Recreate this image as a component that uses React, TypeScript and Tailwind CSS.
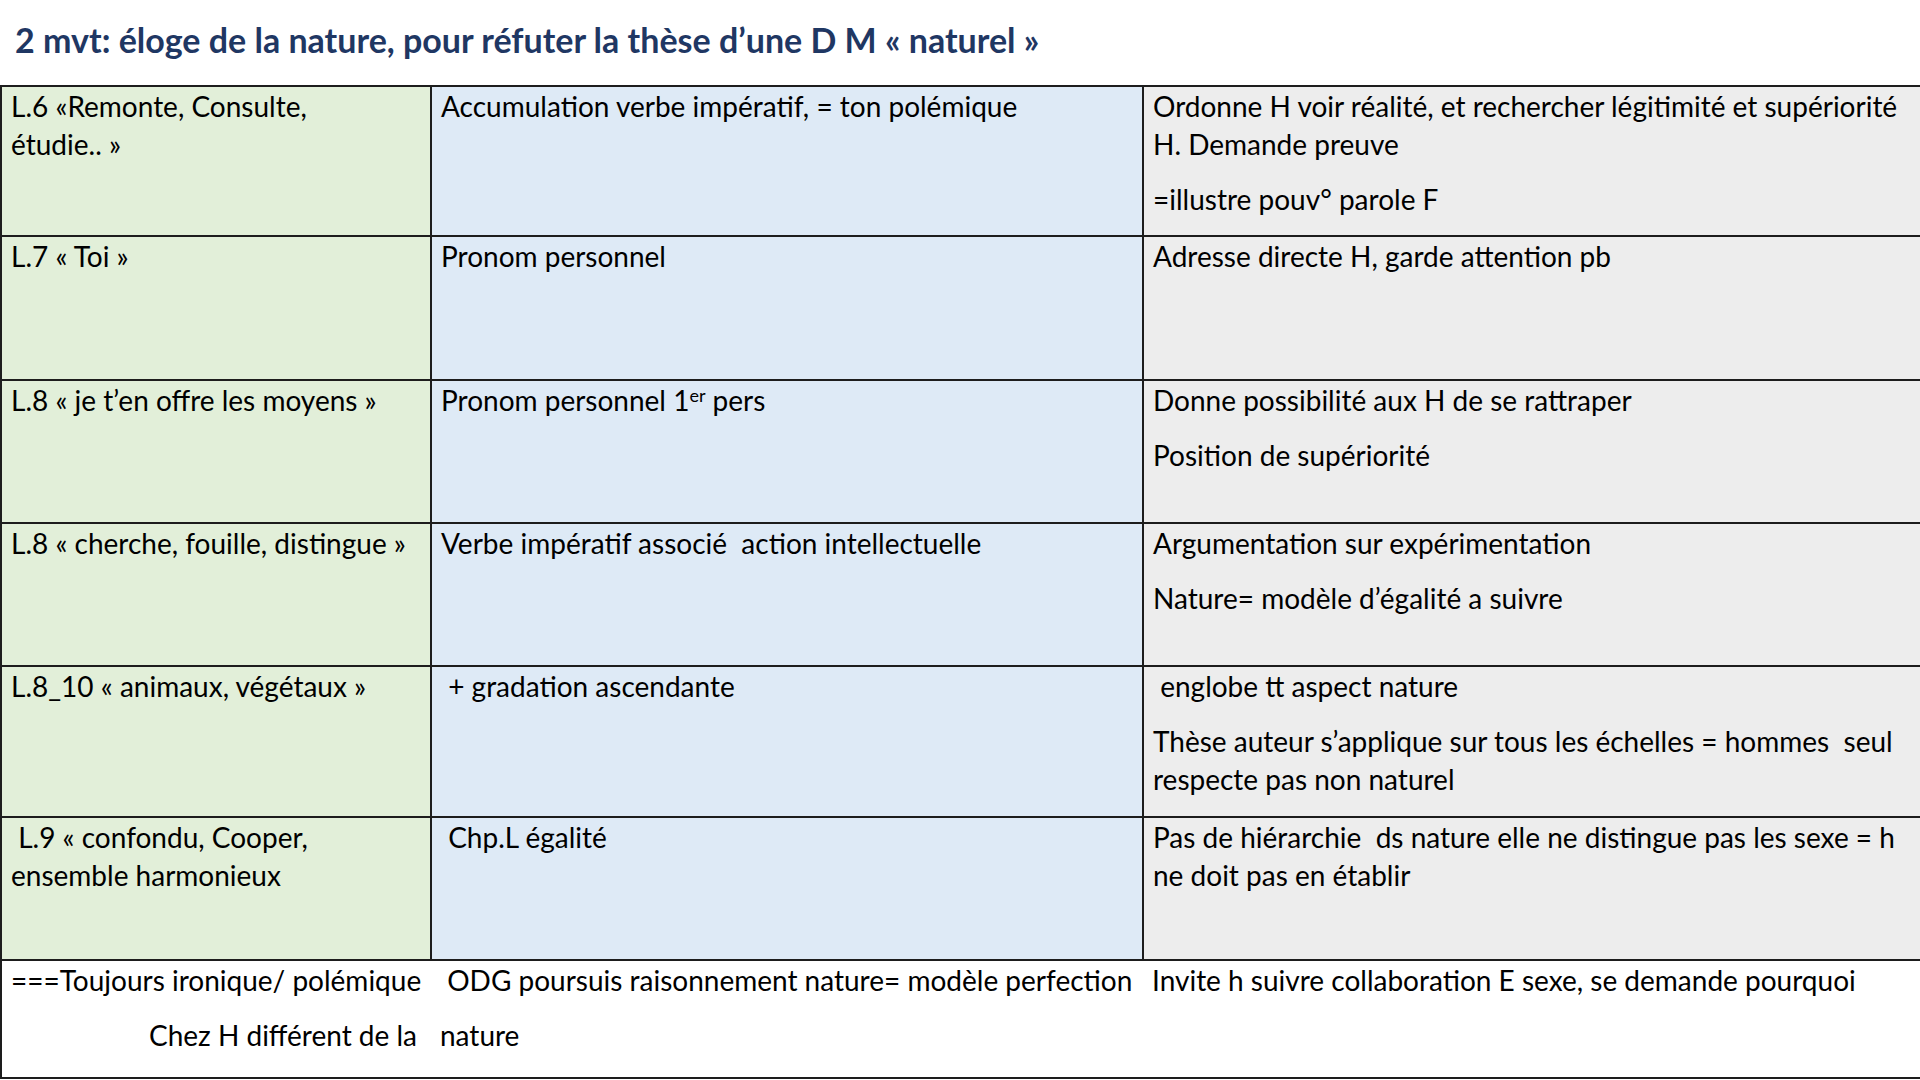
import React from 'react'

const font = { fontFamily: 'Lato, "Open Sans", sans-serif' }

type Row = {
  h: string
  a: React.ReactNode[]
  b: React.ReactNode[]
  c: React.ReactNode[]
}

const rows: Row[] = [
  {
    h: 'h-[150px]',
    a: [
      <>
        L.6 «Remonte, Consulte,
        <br />
        étudie.. »
      </>,
    ],
    b: ['Accumulation verbe impératif, = ton polémique'],
    c: [
      <>
        Ordonne H voir réalité, et rechercher légitimité et supériorité
        <br />
        H. Demande preuve
      </>,
      '=illustre pouv° parole F',
    ],
  },
  {
    h: 'h-[144px]',
    a: ['L.7 « Toi »'],
    b: ['Pronom personnel'],
    c: ['Adresse directe H, garde attention pb'],
  },
  {
    h: 'h-[143px]',
    a: ['L.8 « je t’en offre les moyens »'],
    b: [
      <>
        Pronom personnel 1<sup className="text-[18px]">er</sup> pers
      </>,
    ],
    c: ['Donne possibilité aux H de se rattraper', 'Position de supériorité'],
  },
  {
    h: 'h-[143px]',
    a: ['L.8 « cherche, fouille, distingue »'],
    b: ['Verbe impératif associé  action intellectuelle'],
    c: ['Argumentation sur expérimentation', 'Nature= modèle d’égalité a suivre'],
  },
  {
    h: 'h-[151px]',
    a: ['L.8_10 « animaux, végétaux »'],
    b: ['\u00a0+ gradation ascendante'],
    c: [
      '\u00a0englobe tt aspect nature',
      <>
        Thèse auteur s’applique sur tous les échelles = hommes  seul
        <br />
        respecte pas non naturel
      </>,
    ],
  },
  {
    h: 'h-[143px]',
    a: [
      <>
        {'\u00a0L.9 « confondu, Cooper,'}
        <br />
        ensemble harmonieux
      </>,
    ],
    b: ['\u00a0Chp.L égalité'],
    c: [
      <>
        Pas de hiérarchie  ds nature elle ne distingue pas les sexe = h
        <br />
        ne doit pas en établir
      </>,
    ],
  },
]

function Cell({ items, bg }: { items: React.ReactNode[]; bg: string }) {
  return (
    <td className={`${bg} border-2 border-[#1d1d1d] px-[9px] pt-0 align-top`}>
      {items.map((t, i) => (
        <p key={i} className={`whitespace-pre ${i > 0 ? 'mt-[17px]' : ''}`}>
          {t}
        </p>
      ))}
    </td>
  )
}

export default function App() {
  return (
    <div className="h-[1080px] w-[1920px] overflow-hidden bg-white text-black" style={font}>
      <h1 className="pl-[15px] pt-[20px] text-[34px] leading-[40px] font-bold text-[#1f3763]">
        2 mvt: éloge de la nature, pour réfuter la thèse d’une D M « naturel »
      </h1>
      <table className="mt-[25px] w-[1920px] table-fixed border-collapse text-[28px] leading-[38px]">
        <colgroup>
          <col className="w-[430px]" />
          <col className="w-[712px]" />
          <col className="w-[778px]" />
        </colgroup>
        <tbody>
          {rows.map((r, i) => (
            <tr key={i} className={r.h}>
              <Cell items={r.a} bg="bg-[#e2efd9]" />
              <Cell items={r.b} bg="bg-[#deeaf6]" />
              <Cell items={r.c} bg="bg-[#ededed]" />
            </tr>
          ))}
          <tr className="h-[118px] border-2 border-[#1d1d1d]">
            <td className="px-[9px] pt-0 align-top">
              <p className="whitespace-nowrap">===Toujours ironique/ polémique</p>
              <p className="mt-[17px] pr-[5px] text-right whitespace-nowrap">Chez H différent de la</p>
            </td>
            <td className="px-[9px] pt-0 align-top">
              <p className="whitespace-nowrap">{'\u00a0ODG poursuis raisonnement nature= modèle perfection'}</p>
              <p className="mt-[17px]">nature</p>
            </td>
            <td className="px-[9px] pt-0 align-top">
              <p className="whitespace-nowrap">Invite h suivre collaboration E sexe, se demande pourquoi</p>
            </td>
          </tr>
        </tbody>
      </table>
    </div>
  )
}
